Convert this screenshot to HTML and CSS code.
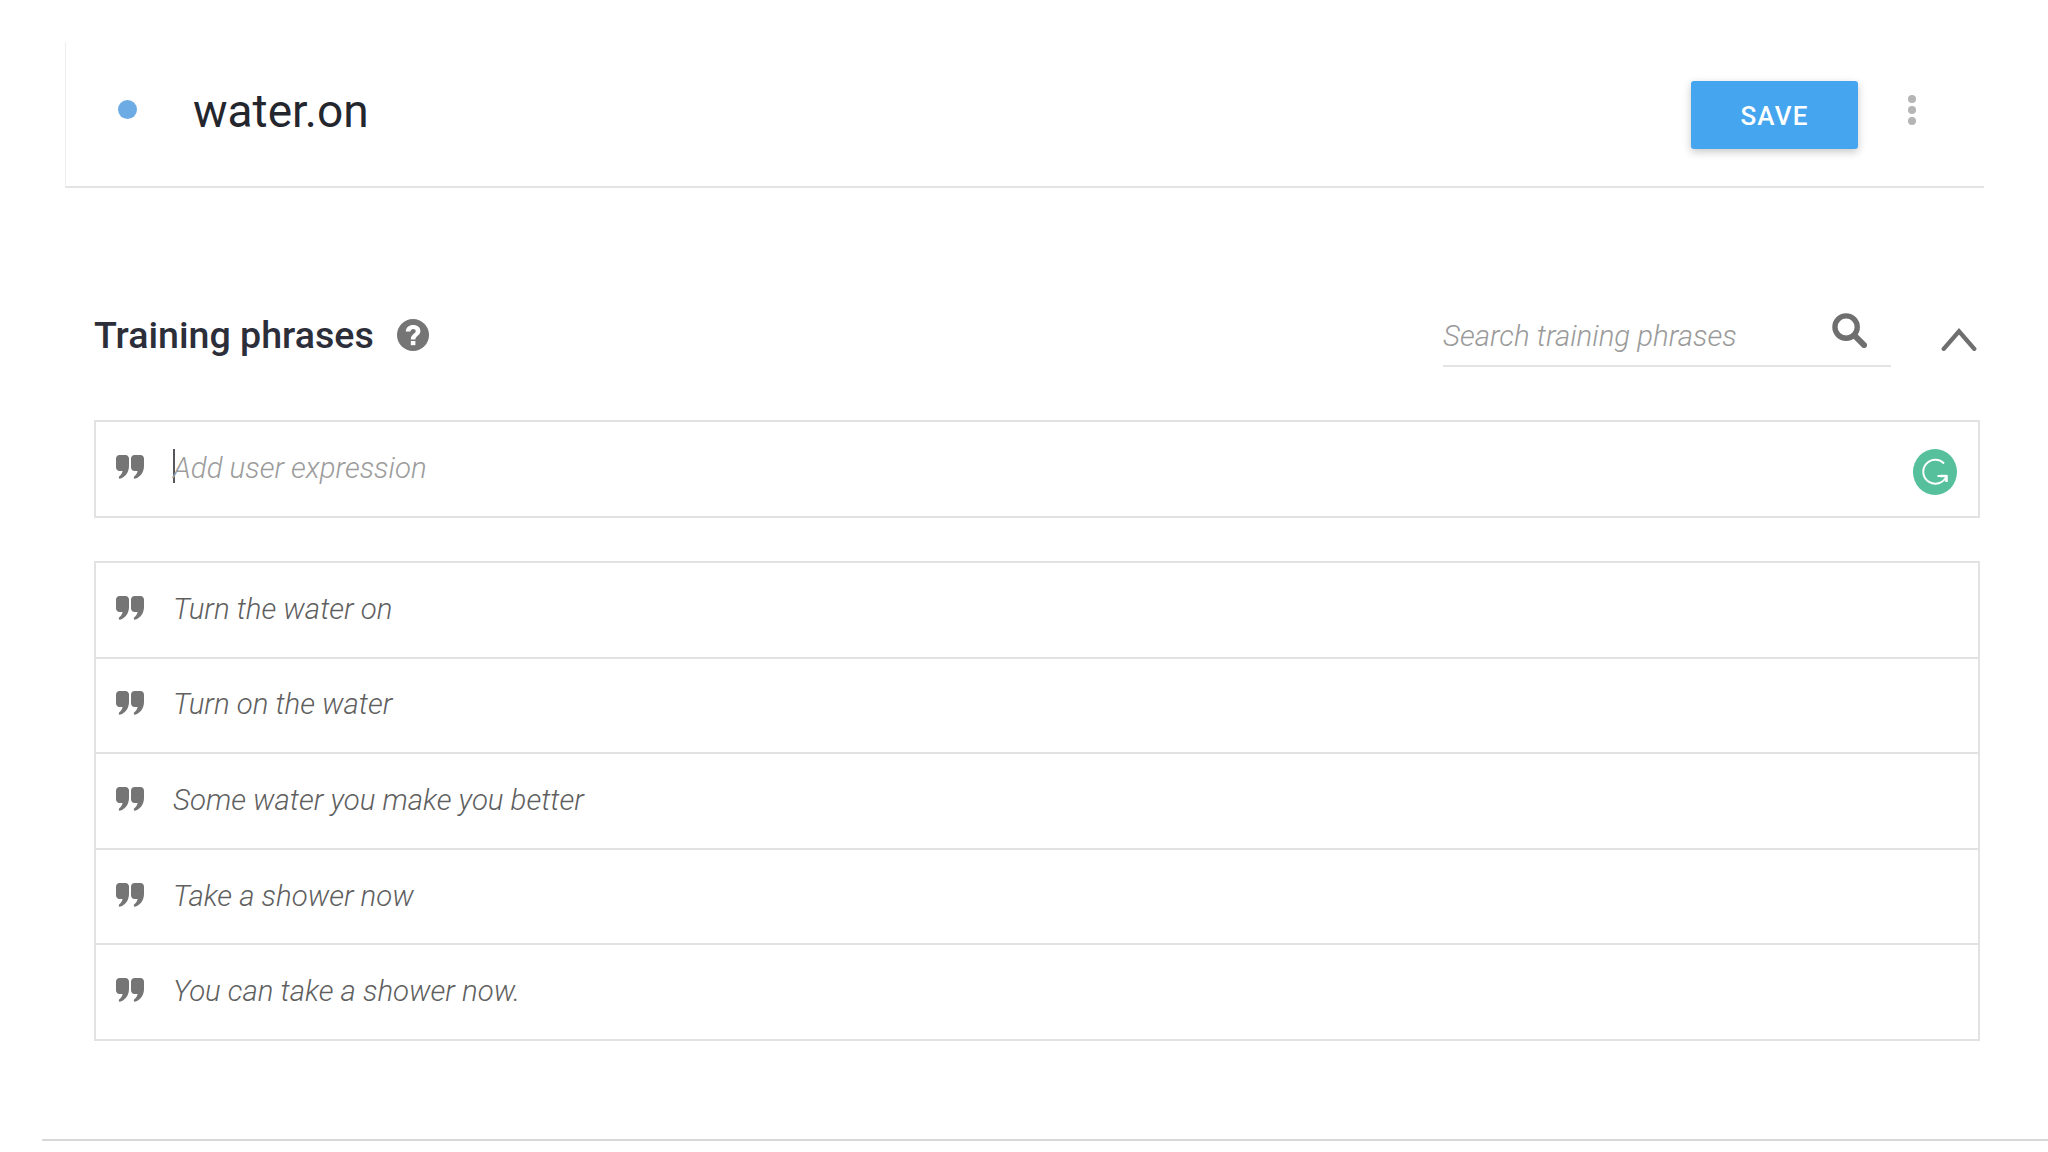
FILE: index.html
```html
<!DOCTYPE html>
<html lang="en">
<head>
  <meta charset="UTF-8" />
  <title>water.on</title>
  <link rel="stylesheet" href="styles.css">
</head>
<body>

  <div class="header">
    <span class="dot"></span>
    <div class="title">water.on</div>
    <button class="save">SAVE</button>
    <div class="more"><span></span><span></span><span></span></div>
  </div>

  <div class="section">
    <div class="section-head">
      <div class="section-title">Training phrases</div>
      <svg class="help" viewBox="0 0 32 32">
        <circle cx="16" cy="16" r="16" fill="#757575"/>
        <path d="M8.800 12.400C9 8.400 12 6 16.200 6c4.300 0 7.200 2.500 7.200 6 0 4.700-5 4.800-5 8.500h-4.600c0-5.500 4.900-5.700 4.900-8.300 0-1.300-1-2.200-2.500-2.200-1.600 0-2.600 1-2.800 2.400z" fill="#fff"/>
        <rect x="13.800" y="22" width="4.600" height="4.200" fill="#fff"/>
      </svg>
      <div class="search">
        <span class="search-text">Search training phrases</span>
        <svg class="search-icon" viewBox="0 0 36 36">
          <circle cx="14.500" cy="14.500" r="11.500" fill="none" stroke="#6f6f6f" stroke-width="5.500"/>
          <path d="M23 23l10 10" stroke="#6f6f6f" stroke-width="6" stroke-linecap="round"/>
        </svg>
      </div>
      <svg class="chevron" viewBox="0 0 32 22">
        <path d="M2 20L16 4l14 16" fill="none" stroke="#6f6f6f" stroke-width="4" stroke-linecap="round"/>
      </svg>
    </div>

    <div class="box add-row">
      <svg class="quote" viewBox="0 0 28 24"><use href="#quote-mark"/></svg>
      <span class="caret"></span>
      <span class="placeholder">Add user expression</span>
      <svg class="grammarly" viewBox="0 0 44 46">
        <ellipse cx="22" cy="23" rx="22" ry="23" fill="#56c09c"/>
        <path d="M31 14.500a12 12 0 1 0 2.500 12.500h-9" fill="none" stroke="#fff" stroke-width="2"/>
        <path d="M33.500 27v6M33.500 27l-6 0" fill="none" stroke="#fff" stroke-width="2.500"/>
      </svg>
    </div>

    <div class="box phrases">
      <div class="phrase">
        <svg class="quote" viewBox="0 0 28 24"><use href="#quote-mark"/></svg>
        <span class="phrase-text">Turn the water on</span>
      </div>
      <div class="phrase">
        <svg class="quote" viewBox="0 0 28 24"><use href="#quote-mark"/></svg>
        <span class="phrase-text">Turn on the water</span>
      </div>
      <div class="phrase">
        <svg class="quote" viewBox="0 0 28 24"><use href="#quote-mark"/></svg>
        <span class="phrase-text">Some water you make you better</span>
      </div>
      <div class="phrase">
        <svg class="quote" viewBox="0 0 28 24"><use href="#quote-mark"/></svg>
        <span class="phrase-text">Take a shower now</span>
      </div>
      <div class="phrase">
        <svg class="quote" viewBox="0 0 28 24"><use href="#quote-mark"/></svg>
        <span class="phrase-text">You can take a shower now.</span>
      </div>
    </div>
  </div>

  <div class="bottom-line"></div>

  <svg class="defs" width="0" height="0">
    <defs>
      <g id="quote-mark" fill="#757575">
        <path d="M0 3.500C0 1.600 1.600 0 3.500 0H9.500C11.400 0 13 1.600 13 3.500V11c0 5.800-3.200 10.400-8.300 12.600-1.500.6-2.600-1.200-1.400-2.300 1.700-1.400 2.900-3.200 3.300-5.300H3.500C1.600 16 0 14.400 0 12.500z"/>
        <path d="M15 3.500C15 1.600 16.600 0 18.500 0h6C26.400 0 28 1.600 28 3.500V11c0 5.800-3.200 10.400-8.300 12.600-1.500.6-2.600-1.200-1.400-2.300 1.700-1.400 2.900-3.200 3.300-5.300h-3.100c-1.900 0-3.500-1.600-3.500-3.500z"/>
      </g>
    </defs>
  </svg>

</body>
</html>
```

FILE: styles.css
```css
body {
  margin: 0;
  height: 1152px;
  overflow: hidden;
  background: #fff;
  font-family: Roboto, sans-serif;
  color: #24262e;
}

.header {
  display: flex;
  align-items: center;
  height: 144px;
  margin: 42px 64px 0 65px;
  padding: 0 68px 0 52px;
  border-left: 1px solid #efefef;
  border-bottom: 2px solid #e4e4e6;
}

.dot {
  width: 19px;
  height: 19px;
  border-radius: 50%;
  background: #6cabe3;
  margin-right: 56px;
  position: relative;
  top: -5px;
}

.title {
  flex: 1;
  font-size: 46px;
  position: relative;
  top: -3px;
}

.save {
  width: 167px;
  height: 68px;
  margin-top: 2px;
  margin-right: 50px;
  padding-top: 2px;
  border: none;
  border-radius: 3px;
  background: #45a5ef;
  color: #fff;
  font-family: Roboto, sans-serif;
  font-size: 26px;
  font-weight: 500;
  letter-spacing: 1.200px;
  box-shadow: 0 3px 8px rgba(0, 0, 0, 0.22);
}

.more {
  display: flex;
  flex-direction: column;
  gap: 3px;
  position: relative;
  top: -4px;
}

.more span {
  width: 8px;
  height: 8px;
  border-radius: 50%;
  background: #b5b5b5;
}

.section {
  margin: 0 68px 0 94px;
}

.section-head {
  display: flex;
  align-items: center;
  height: 120px;
  margin-top: 88px;
  margin-bottom: 24px;
}

.section-title {
  font-size: 37.600px;
  font-weight: 500;
  color: #2c2e39;
  margin-right: 23px;
  position: relative;
  top: -1px;
}

.help {
  width: 32px;
  height: 32px;
  position: relative;
  top: -1px;
}

.search {
  display: flex;
  align-items: center;
  justify-content: space-between;
  width: 448px;
  height: 62px;
  margin-left: auto;
  margin-right: 49px;
  border-bottom: 2px solid #e4e4e6;
  box-sizing: border-box;
  padding-right: 24px;
}

.search-text {
  font-size: 29.400px;
  font-weight: 300;
  font-style: italic;
  color: #9a9a9a;
  position: relative;
  top: 1px;
}

.search-icon {
  width: 35px;
  height: 35px;
  position: relative;
  top: -5px;
}

.chevron {
  width: 38px;
  height: 24px;
  margin-right: 2px;
  position: relative;
  top: 3px;
}

.box {
  border: 2px solid #e2e2e4;
}

.add-row {
  display: flex;
  align-items: center;
  height: 94px;
  padding: 0 21px 0 20px;
}

.quote {
  width: 28px;
  height: 24px;
  margin-right: 29px;
  flex-shrink: 0;
  position: relative;
  top: -2px;
}

.caret {
  width: 2px;
  height: 34px;
  background: #55575c;
  margin-top: -6px;
  margin-right: -2px;
}

.placeholder {
  flex: 1;
  font-size: 29.400px;
  font-weight: 300;
  font-style: italic;
  color: #9c9c9c;
  position: relative;
  top: -1px;
}

.grammarly {
  width: 44px;
  height: 46px;
  position: relative;
  top: 3px;
}

.phrases {
  margin-top: 43px;
}

.phrase {
  display: flex;
  align-items: center;
  height: 93.600px;
  padding: 0 20px;
  font-size: 29.400px;
  font-weight: 300;
  font-style: italic;
  color: #5f5f5f;
  border-bottom: 2px solid #e2e2e4;
}

.phrase:last-child {
  border-bottom: none;
}

.phrase-text {
  position: relative;
  top: -1px;
}

.bottom-line {
  height: 2px;
  margin: 98px 0 0 42px;
  background: #d8d8da;
}

.defs {
  position: absolute;
}
```
